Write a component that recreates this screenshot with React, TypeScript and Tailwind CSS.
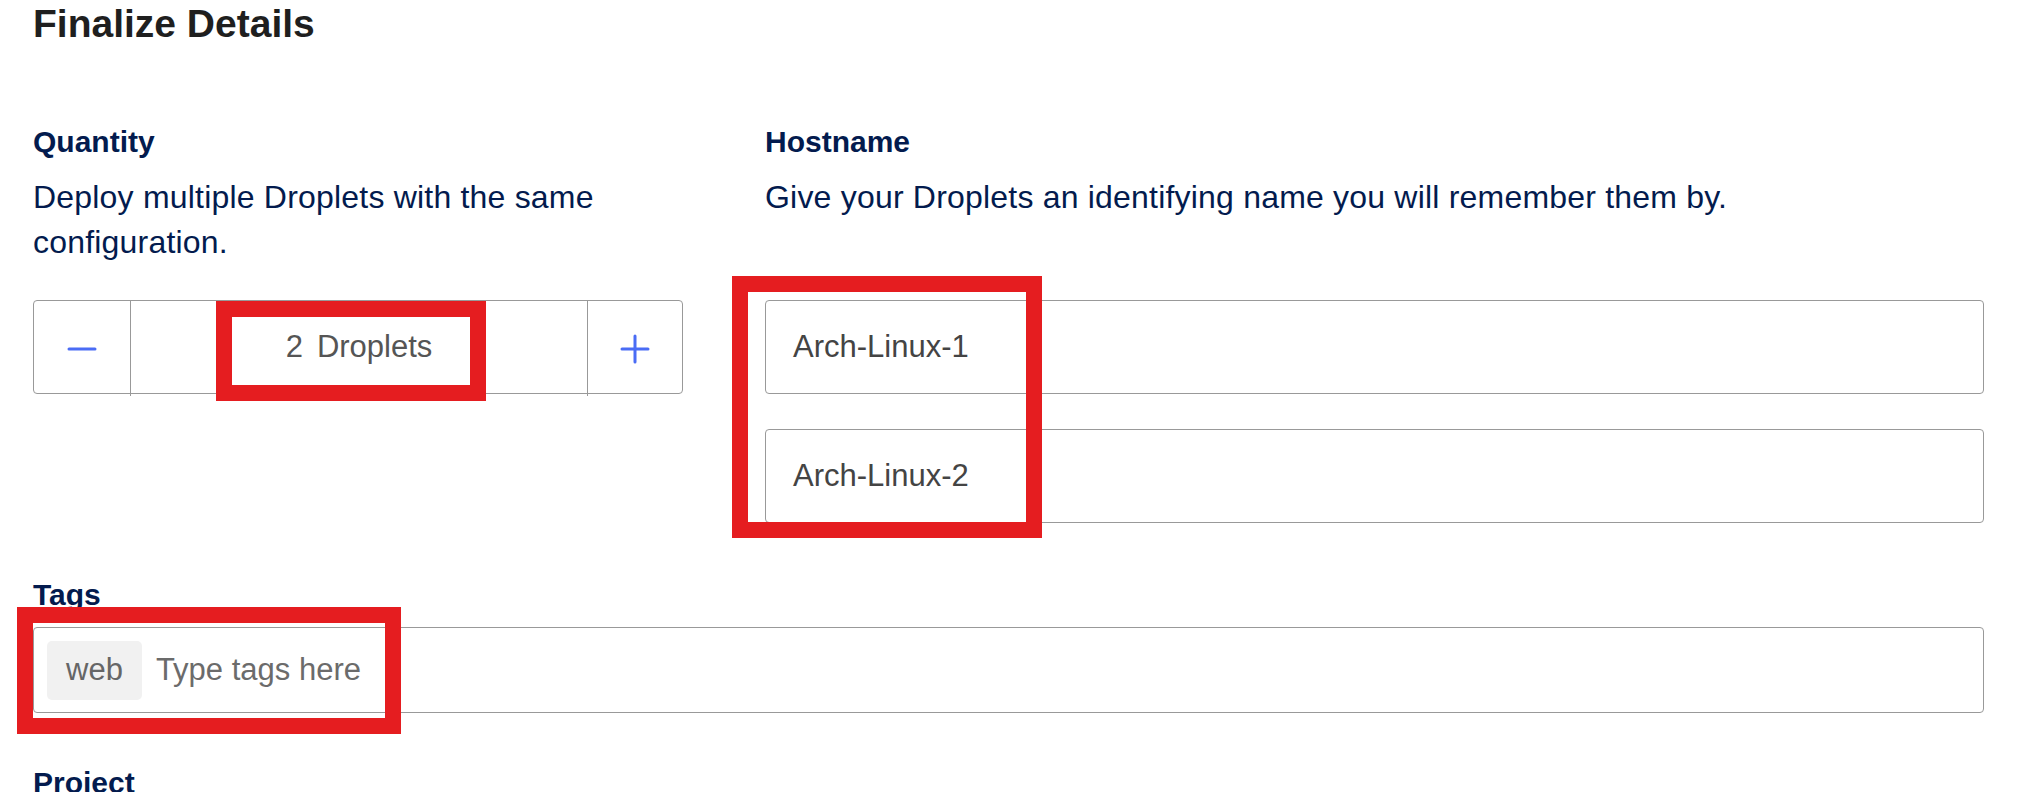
import React from "react";

function MinusIcon() {
  return (
    <svg width="30" height="30" viewBox="0 0 30 30" fill="none">
      <line x1="2" y1="15" x2="28" y2="15" stroke="#4a6cf5" strokeWidth="3" strokeLinecap="round" />
    </svg>
  );
}

function PlusIcon() {
  return (
    <svg width="30" height="30" viewBox="0 0 30 30" fill="none">
      <line x1="2" y1="15" x2="28" y2="15" stroke="#4a6cf5" strokeWidth="3" strokeLinecap="round" />
      <line x1="15" y1="2" x2="15" y2="28" stroke="#4a6cf5" strokeWidth="3" strokeLinecap="round" />
    </svg>
  );
}

export default function App() {
  return (
    <div className="relative min-h-screen bg-white pl-[33px] pr-[44px] pt-[2px] font-['Liberation_Sans',Arial,sans-serif]">
      <h1 className="text-[39px] leading-[44px] font-semibold text-[#1f1f1f]">Finalize Details</h1>

      <div className="mt-[78px] grid grid-cols-[650px_1fr] gap-x-[82px] gap-y-[35px]">
        <div>
          <div className="text-[30px] leading-[36px] font-semibold text-[#031b4e]">Quantity</div>
          <p className="mt-[15px] text-[32px] leading-[45px] tracking-[0.2px] text-[#031b4e]">
            Deploy multiple Droplets with the same configuration.
          </p>
        </div>
        <div>
          <div className="text-[30px] leading-[36px] font-semibold text-[#031b4e]">Hostname</div>
          <p className="mt-[15px] text-[32px] leading-[45px] tracking-[0.2px] text-[#031b4e]">
            Give your Droplets an identifying name you will remember them by.
          </p>
        </div>

        <div className="flex h-[94px] items-start rounded-[4px] border border-[#999999]">
          <div className="flex h-[95px] w-[97px] shrink-0 items-center justify-center border-r border-[#999999]">
            <MinusIcon />
          </div>
          <div className="flex h-[92px] flex-1 items-center justify-center gap-[14px] text-[31px] text-[#555555]">
            <span>2</span>
            <span>Droplets</span>
          </div>
          <div className="flex h-[95px] w-[95px] shrink-0 items-center justify-center border-l border-[#999999]">
            <PlusIcon />
          </div>
        </div>

        <div className="flex flex-col gap-[35px]">
          <div className="flex h-[94px] items-center rounded-[4px] border border-[#999999] pl-[27px] text-[31px] text-[#444444]">
            Arch-Linux-1
          </div>
          <div className="flex h-[94px] items-center rounded-[4px] border border-[#999999] pl-[27px] text-[31px] text-[#444444]">
            Arch-Linux-2
          </div>
        </div>
      </div>

      <div className="mt-[54px] text-[30px] leading-[36px] font-semibold text-[#031b4e]">Tags</div>
      <div className="mt-[14px] flex h-[86px] items-center rounded-[4px] border border-[#999999] pl-[13px]">
        <div className="flex h-[59px] items-center rounded-[5px] bg-[#f1f1f1] px-[19px] text-[31px] text-[#666666]">
          web
        </div>
        <span className="ml-[14px] text-[31px] text-[#6b6b6b]">Type tags here</span>
      </div>

      <div className="mt-[52px] text-[30px] leading-[36px] font-semibold text-[#031b4e]">Project</div>

      <div className="pointer-events-none absolute left-[216px] top-[301px] h-[100px] w-[270px] border-[16px] border-[#e51d20]" />
      <div className="pointer-events-none absolute left-[732px] top-[276px] h-[262px] w-[310px] border-[16px] border-[#e51d20]" />
      <div className="pointer-events-none absolute left-[17px] top-[607px] h-[127px] w-[384px] border-[16px] border-[#e51d20]" />
    </div>
  );
}
